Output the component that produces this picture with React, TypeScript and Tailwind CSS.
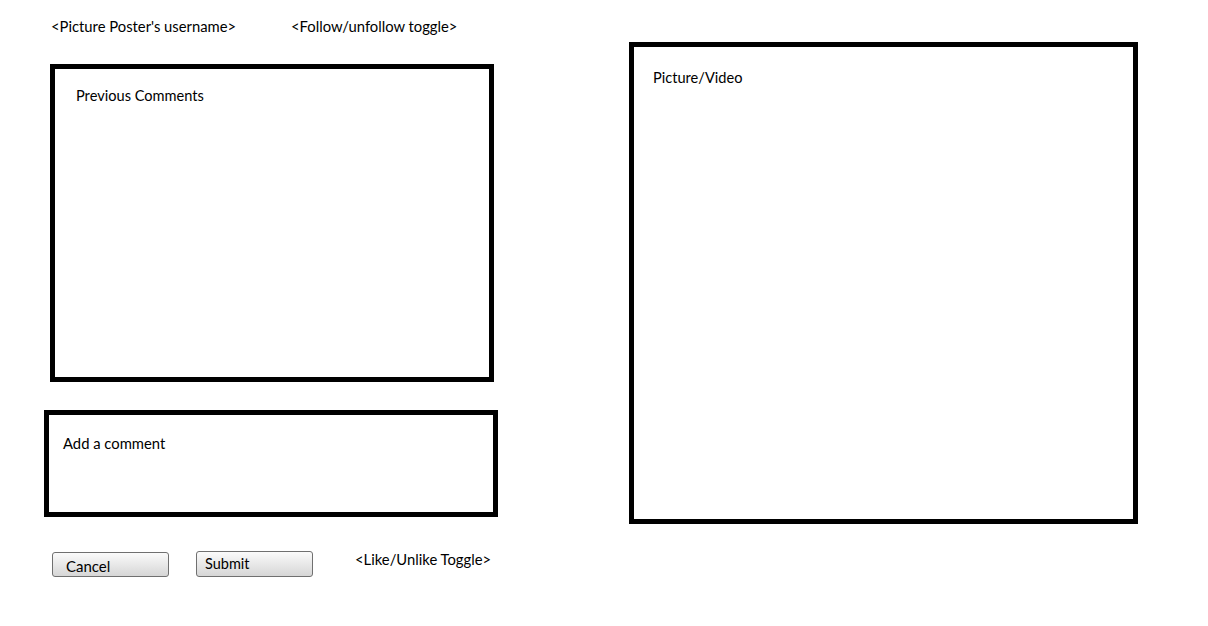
const font = "font-['Lato','Open_Sans',sans-serif]";

const WireButton = ({ label, className }: { label: string; className?: string }) => (
  <button
    className={`w-[117px] rounded-[3px] border border-[#707070] bg-gradient-to-b from-[#fbfbfb] to-[#d6d6d6] text-left leading-[20px] text-black ${className ?? ""}`}
  >
    {label}
  </button>
);

export default function App() {
  return (
    <div className={`flex h-[626px] w-[1208px] bg-white text-[14.8px] leading-[20px] text-black ${font}`}>
      {/* left column: header, comments, form */}
      <div className="ml-[44px] flex w-[454px] flex-col">
        <div className="ml-[7px] mt-[16px] flex">
          <span className="w-[240px]">&lt;Picture Poster's username&gt;</span>
          <span>&lt;Follow/unfollow toggle&gt;</span>
        </div>

        <div className="ml-[6px] mt-[28px] h-[318px] w-[444px] border-[5px] border-black pl-[21px] pt-[17px] text-[14.6px]">
          Previous Comments
        </div>

        <div className="mt-[28px] h-[107px] w-[454px] border-[5px] border-black pl-[14px] pt-[18px]">
          Add a comment
        </div>

        <div className="ml-[8px] mt-[34px] flex items-start">
          <WireButton label="Cancel" className="mt-[1px] h-[25px] pl-[13px] pt-[2px] text-[15px]" />
          <WireButton label="Submit" className="ml-[27px] h-[26px] pl-[8px] text-[14.5px]" />
          <span className="ml-[42px] -mt-[2px]">&lt;Like/Unlike Toggle&gt;</span>
        </div>
      </div>

      {/* media area */}
      <div className="ml-[131px] mt-[42px] h-[482px] w-[509px] border-[5px] border-black pl-[19px] pt-[21px] text-[14.6px]">
        Picture/Video
      </div>
    </div>
  );
}
